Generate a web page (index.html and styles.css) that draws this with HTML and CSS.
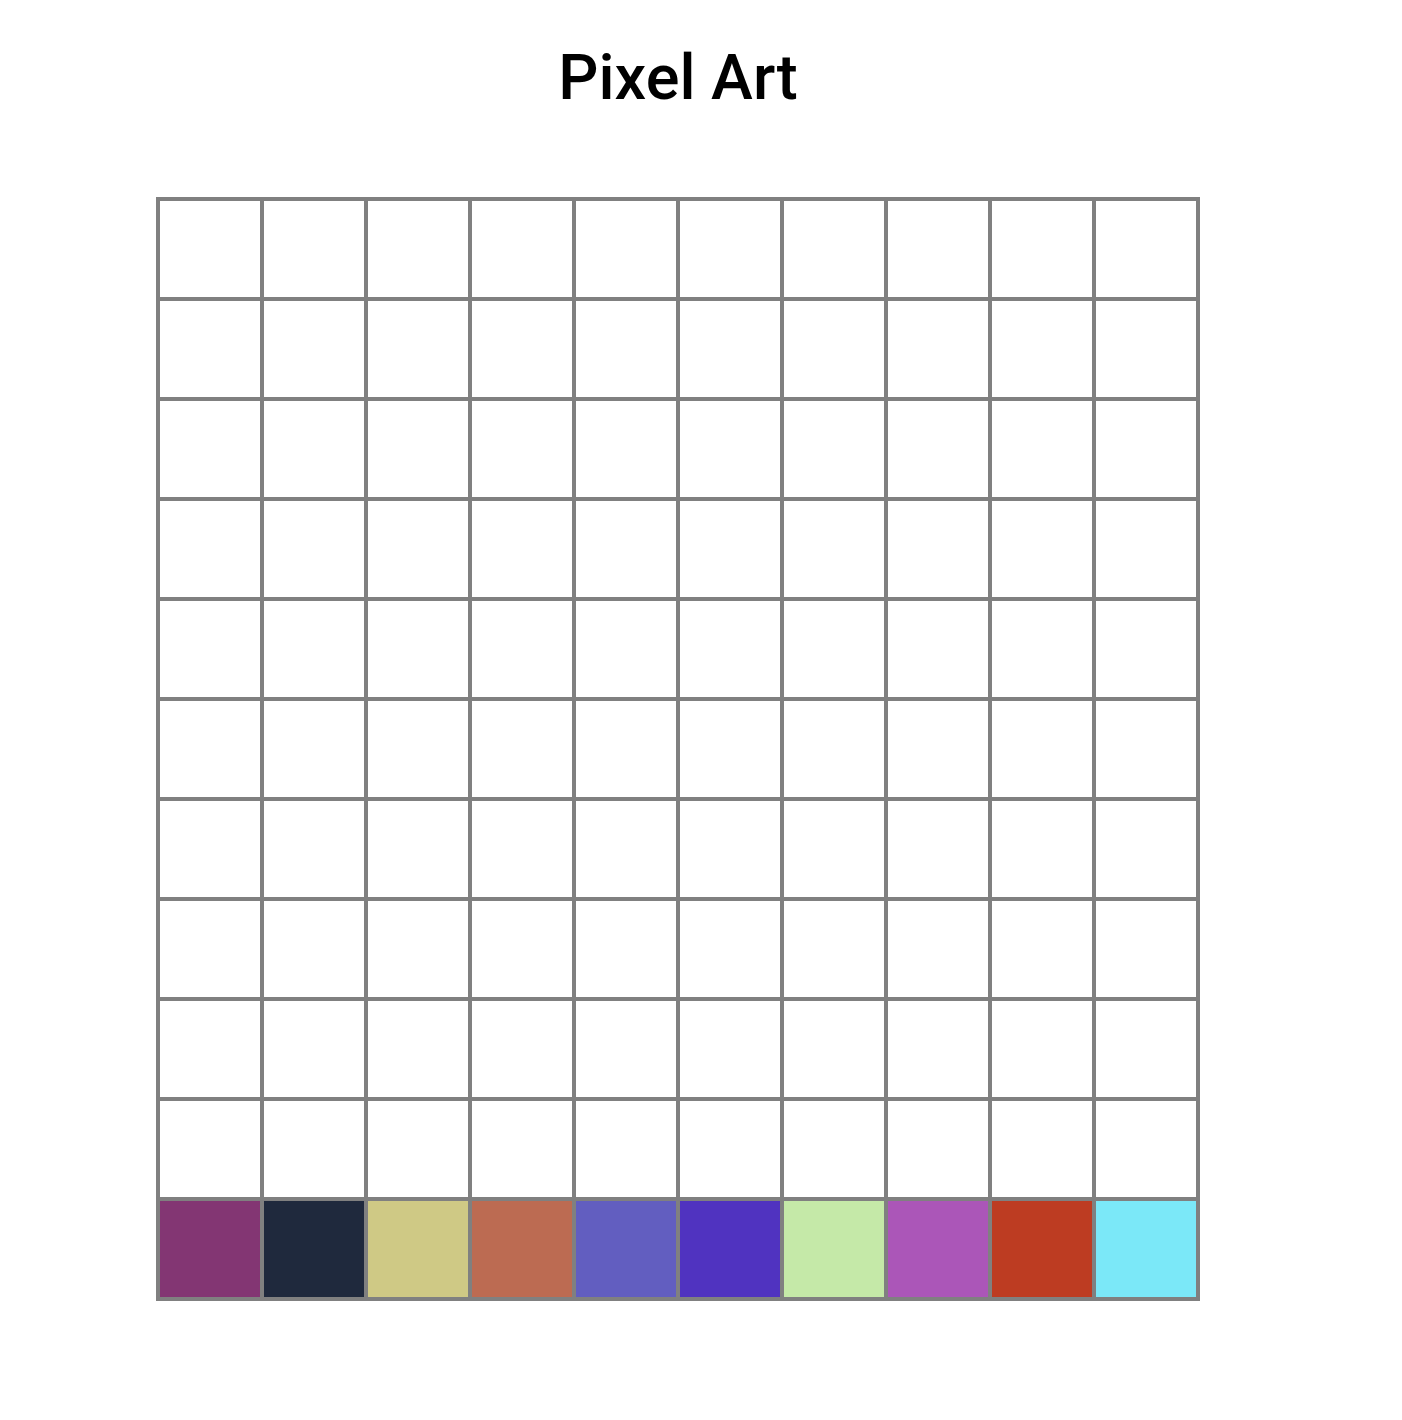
FILE: index.html
```html
<!DOCTYPE html>
<html>
<head>
<meta charset="utf-8">
<title>Pixel Art</title>
<link rel="stylesheet" href="styles.css">
</head>
<body>
<div class="app">
  <h1 class="title">Pixel Art</h1>
  <div class="board">
    <div class="cell"></div><div class="cell"></div><div class="cell"></div><div class="cell"></div><div class="cell"></div><div class="cell"></div><div class="cell"></div><div class="cell"></div><div class="cell"></div><div class="cell"></div>
    <div class="cell"></div><div class="cell"></div><div class="cell"></div><div class="cell"></div><div class="cell"></div><div class="cell"></div><div class="cell"></div><div class="cell"></div><div class="cell"></div><div class="cell"></div>
    <div class="cell"></div><div class="cell"></div><div class="cell"></div><div class="cell"></div><div class="cell"></div><div class="cell"></div><div class="cell"></div><div class="cell"></div><div class="cell"></div><div class="cell"></div>
    <div class="cell"></div><div class="cell"></div><div class="cell"></div><div class="cell"></div><div class="cell"></div><div class="cell"></div><div class="cell"></div><div class="cell"></div><div class="cell"></div><div class="cell"></div>
    <div class="cell"></div><div class="cell"></div><div class="cell"></div><div class="cell"></div><div class="cell"></div><div class="cell"></div><div class="cell"></div><div class="cell"></div><div class="cell"></div><div class="cell"></div>
    <div class="cell"></div><div class="cell"></div><div class="cell"></div><div class="cell"></div><div class="cell"></div><div class="cell"></div><div class="cell"></div><div class="cell"></div><div class="cell"></div><div class="cell"></div>
    <div class="cell"></div><div class="cell"></div><div class="cell"></div><div class="cell"></div><div class="cell"></div><div class="cell"></div><div class="cell"></div><div class="cell"></div><div class="cell"></div><div class="cell"></div>
    <div class="cell"></div><div class="cell"></div><div class="cell"></div><div class="cell"></div><div class="cell"></div><div class="cell"></div><div class="cell"></div><div class="cell"></div><div class="cell"></div><div class="cell"></div>
    <div class="cell"></div><div class="cell"></div><div class="cell"></div><div class="cell"></div><div class="cell"></div><div class="cell"></div><div class="cell"></div><div class="cell"></div><div class="cell"></div><div class="cell"></div>
    <div class="cell"></div><div class="cell"></div><div class="cell"></div><div class="cell"></div><div class="cell"></div><div class="cell"></div><div class="cell"></div><div class="cell"></div><div class="cell"></div><div class="cell"></div>
    <div class="cell c1"></div><div class="cell c2"></div><div class="cell c3"></div><div class="cell c4"></div><div class="cell c5"></div><div class="cell c6"></div><div class="cell c7"></div><div class="cell c8"></div><div class="cell c9"></div><div class="cell c10"></div>
  </div>
</div>
</body>
</html>
```
FILE: styles.css
```css
html, body {
  background: #ffffff;
}
body {
  margin: 8px;
  font-family: Roboto, "Liberation Sans", sans-serif;
}
.app {
  width: 1044px;
  margin-left: 148px;
}
.title {
  margin: 0;
  padding-top: 31px;
  font-family: Roboto, "Liberation Sans", sans-serif;
  font-weight: 500;
  font-size: 63px;
  line-height: 77px;
  text-align: center;
  color: #000;
}
.board {
  margin-top: 81px;
  display: grid;
  grid-template-columns: repeat(10, 104px);
  grid-auto-rows: 100px;
  border: 2px solid #808080;
  width: 1040px;
}
.cell {
  border: 2px solid #808080;
  background: #ffffff;
}
.c1 { background: #833673; }
.c2 { background: #1f293d; }
.c3 { background: #cfc985; }
.c4 { background: #bc6b52; }
.c5 { background: #625ec0; }
.c6 { background: #5033c0; }
.c7 { background: #c5e9a8; }
.c8 { background: #ab56b8; }
.c9 { background: #bd3c22; }
.c10 { background: #7be8f8; }
```
